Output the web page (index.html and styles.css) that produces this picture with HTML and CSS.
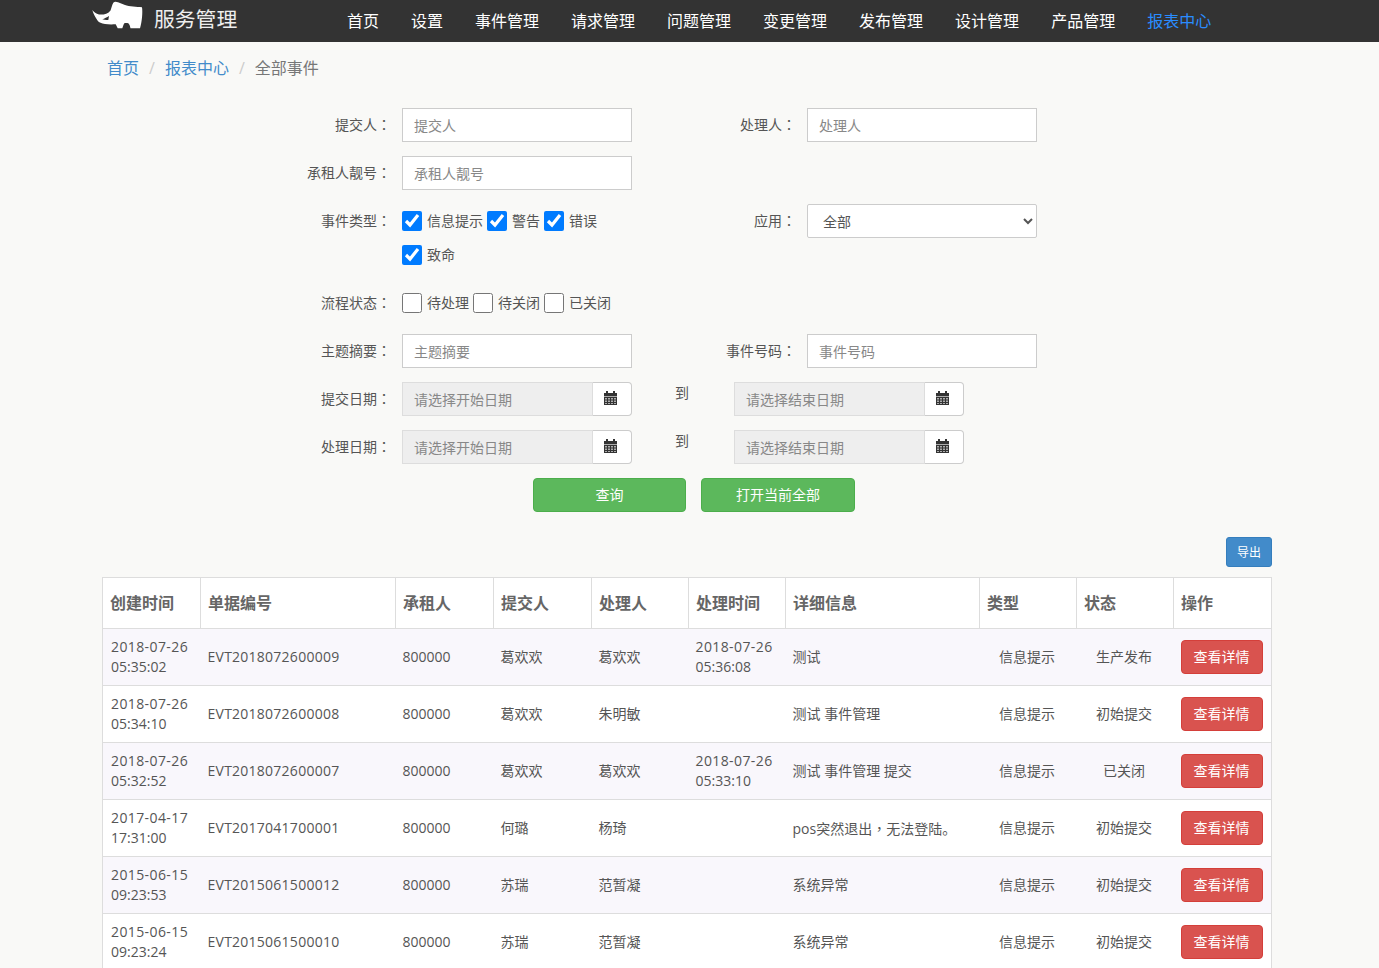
FILE: index.html
```html
<!DOCTYPE html>
<html>
  <head>
    <meta charset="UTF-8" />
    <title>全部事件</title>
    <link rel="stylesheet" href="styles.css">
  </head>
  <body>
    <svg width="0" height="0" class="defs">
      <symbol id="cal" viewBox="0 0 13 14">
        <path fill="#333" d="M2 0h2v2h5V0h2v2h2v12H0V2h2z"/>
        <path fill="#fff" opacity=".6" d="M0 5h13v1H0zM1 7h2v1.500H1zM4 7h2v1.500H4zM7 7h2v1.500H7zM10 7h2v1.500h-2zM1 9.500h2V11H1zM4 9.500h2V11H4zM7 9.500h2V11H7zM10 9.500h2V11h-2zM1 12h2v1H1zM4 12h2v1H4zM7 12h2v1H7zM10 12h2v1h-2z"/>
      </symbol>
    </svg>

    <nav class="topbar">
      <a class="brand" href="#">
        <svg class="logo" width="52" height="30" viewBox="0 0 52 30">
          <path fill="#fff" fill-rule="evenodd" d="M.3 10C2 12 4 14 7 14.500 11 15 16 14 18.500 10.500 19.500 8 20 4.500 21.300 2.700 22.500 1.500 24 1.500 26 2.300L33 5C37 6.500 45 6.800 50 7.300 50.800 12 50 22 48 28.300L38.500 28.300C38 26 37.500 24.500 36.300 23.300 35 22.800 33.500 22.800 32.300 23.300 31.300 24.800 31 26.500 30.300 28.300L25.700 28.300 23.700 24.300C20 24.500 16 24.500 13 24 9.500 23.300 7 22.500 5.700 20.700 3.500 17.500 1.500 14 .3 10ZM10.300 19.300C12.500 18.500 15 17.300 17 16L16.300 20C14.500 20.300 12.300 20 10.300 19.300Z"/>
        </svg>
        <span class="brand-name">服务管理</span>
      </a>
      <ul class="nav-list">
        <li><a href="#">首页</a></li>
        <li><a href="#">设置</a></li>
        <li><a href="#">事件管理</a></li>
        <li><a href="#">请求管理</a></li>
        <li><a href="#">问题管理</a></li>
        <li><a href="#">变更管理</a></li>
        <li><a href="#">发布管理</a></li>
        <li><a href="#">设计管理</a></li>
        <li><a href="#">产品管理</a></li>
        <li><a class="active" href="#">报表中心</a></li>
      </ul>
    </nav>

    <main class="container">
      <ol class="crumbs">
        <li><a href="#">首页</a></li>
        <li><a href="#">报表中心</a></li>
        <li>全部事件</li>
      </ol>

      <form class="search-form">
        <div class="form-row">
          <label class="lbl">提交人：</label>
          <input class="ctl" placeholder="提交人" />
          <label class="lbl2">处理人：</label>
          <input class="ctl" placeholder="处理人" />
        </div>
        <div class="form-row">
          <label class="lbl">承租人靓号：</label>
          <input class="ctl" placeholder="承租人靓号" />
        </div>
        <div class="form-row">
          <label class="lbl">事件类型：</label>
          <div class="checks">
            <label class="chk"><input type="checkbox" checked />信息提示</label>
            <label class="chk"><input type="checkbox" checked />警告</label>
            <label class="chk"><input type="checkbox" checked />错误</label>
            <label class="chk"><input type="checkbox" checked />致命</label>
          </div>
          <label class="lbl2">应用：</label>
          <select class="ctl sel"><option>全部</option></select>
        </div>
        <div class="form-row">
          <label class="lbl">流程状态：</label>
          <div class="checks">
            <label class="chk"><input type="checkbox" />待处理</label>
            <label class="chk"><input type="checkbox" />待关闭</label>
            <label class="chk"><input type="checkbox" />已关闭</label>
          </div>
        </div>
        <div class="form-row">
          <label class="lbl">主题摘要：</label>
          <input class="ctl" placeholder="主题摘要" />
          <label class="lbl2">事件号码：</label>
          <input class="ctl" placeholder="事件号码" />
        </div>
        <div class="form-row">
          <label class="lbl">提交日期：</label>
          <div class="date">
            <input readonly placeholder="请选择开始日期" />
            <span class="date-btn"><svg width="13" height="14"><use href="#cal"/></svg></span>
          </div>
          <span class="to">到</span>
          <div class="date">
            <input readonly placeholder="请选择结束日期" />
            <span class="date-btn"><svg width="13" height="14"><use href="#cal"/></svg></span>
          </div>
        </div>
        <div class="form-row">
          <label class="lbl">处理日期：</label>
          <div class="date">
            <input readonly placeholder="请选择开始日期" />
            <span class="date-btn"><svg width="13" height="14"><use href="#cal"/></svg></span>
          </div>
          <span class="to">到</span>
          <div class="date">
            <input readonly placeholder="请选择结束日期" />
            <span class="date-btn"><svg width="13" height="14"><use href="#cal"/></svg></span>
          </div>
        </div>
        <div class="form-btns">
          <button type="button" class="btn btn-green btn-query">查询</button>
          <button type="button" class="btn btn-green btn-open">打开当前全部</button>
        </div>
      </form>

      <div class="toolbar"><button type="button" class="btn btn-blue">导出</button></div>

      <table class="grid">
        <colgroup>
          <col style="width:98px"><col style="width:195px"><col style="width:98px"><col style="width:98px"><col style="width:97px">
          <col style="width:97px"><col style="width:194px"><col style="width:97px"><col style="width:97px"><col style="width:98px">
        </colgroup>
        <thead>
          <tr><th>创建时间</th><th>单据编号</th><th>承租人</th><th>提交人</th><th>处理人</th><th>处理时间</th><th>详细信息</th><th>类型</th><th>状态</th><th>操作</th></tr>
        </thead>
        <tbody>
          <tr>
            <td><span class="day">2018-07-26</span> 05:35:02</td><td class="code">EVT2018072600009</td><td>800000</td><td>葛欢欢</td><td>葛欢欢</td><td><span class="day">2018-07-26</span> 05:36:08</td><td>测试</td>
            <td class="mid">信息提示</td><td class="mid">生产发布</td><td><button type="button" class="btn btn-red">查看详情</button></td>
          </tr>
          <tr>
            <td><span class="day">2018-07-26</span> 05:34:10</td><td class="code">EVT2018072600008</td><td>800000</td><td>葛欢欢</td><td>朱明敏</td><td></td><td>测试 事件管理</td>
            <td class="mid">信息提示</td><td class="mid">初始提交</td><td><button type="button" class="btn btn-red">查看详情</button></td>
          </tr>
          <tr>
            <td><span class="day">2018-07-26</span> 05:32:52</td><td class="code">EVT2018072600007</td><td>800000</td><td>葛欢欢</td><td>葛欢欢</td><td><span class="day">2018-07-26</span> 05:33:10</td><td>测试 事件管理 提交</td>
            <td class="mid">信息提示</td><td class="mid">已关闭</td><td><button type="button" class="btn btn-red">查看详情</button></td>
          </tr>
          <tr>
            <td><span class="day">2017-04-17</span> 17:31:00</td><td class="code">EVT2017041700001</td><td>800000</td><td>何璐</td><td>杨琦</td><td></td><td>pos突然退出<span class="tc">，</span>无法登陆。</td>
            <td class="mid">信息提示</td><td class="mid">初始提交</td><td><button type="button" class="btn btn-red">查看详情</button></td>
          </tr>
          <tr>
            <td><span class="day">2015-06-15</span> 09:23:53</td><td class="code">EVT2015061500012</td><td>800000</td><td>苏瑞</td><td>范暂凝</td><td></td><td>系统异常</td>
            <td class="mid">信息提示</td><td class="mid">初始提交</td><td><button type="button" class="btn btn-red">查看详情</button></td>
          </tr>
          <tr>
            <td><span class="day">2015-06-15</span> 09:23:24</td><td class="code">EVT2015061500010</td><td>800000</td><td>苏瑞</td><td>范暂凝</td><td></td><td>系统异常</td>
            <td class="mid">信息提示</td><td class="mid">初始提交</td><td><button type="button" class="btn btn-red">查看详情</button></td>
          </tr>
        </tbody>
      </table>
    </main>
  </body>
</html>
```

FILE: styles.css
```css
* {
  box-sizing: border-box;
}
body {
  margin: 0;
  background: #f9f9f7;
  color: #555;
  font-family: "Open Sans", "Noto Sans CJK SC", sans-serif;
  font-size: 14px;
  line-height: 20px;
}
a {
  text-decoration: none;
}
.defs {
  display: block;
  height: 0;
}
.topbar {
  height: 42px;
  background: #333;
  display: flex;
  padding-left: 92px;
}
.brand {
  display: flex;
  align-items: flex-start;
  width: 239px;
  color: #eee;
}
.logo {
  margin-right: 10px;
}
.brand-name {
  font-size: 20.8px;
  line-height: 38px;
}
.nav-list {
  list-style: none;
  display: flex;
  gap: 32px;
  margin: 0;
  padding: 0 0 0 16px;
}
.nav-list a {
  color: #fff;
  font-size: 16px;
  line-height: 42px;
  display: block;
}
.nav-list a.active {
  color: #2a8cff;
}
.container {
  width: 1170px;
  margin-left: 102px;
}
.crumbs {
  list-style: none;
  display: flex;
  margin: 0;
  padding: 15px 5px 0;
  height: 66px;
  font-size: 16px;
  line-height: 22px;
  color: #777;
}
.crumbs a {
  color: #428bca;
}
.crumbs li + li::before {
  content: "/";
  color: #ccc;
  padding: 0 10px;
}
.form-row {
  display: flex;
  align-items: flex-start;
  margin-bottom: 14px;
}
.lbl,
.lbl2 {
  text-align: right;
  line-height: 34px;
  margin-right: 11px;
  font-family: "Open Sans", "Noto Sans CJK TC", sans-serif;
}
.lbl {
  width: 289px;
}
.lbl2 {
  width: 164px;
}
.tc {
  font-family: "Noto Sans CJK TC", sans-serif;
}
.ctl {
  width: 230px;
  height: 34px;
  padding: 6px 11px;
  border: 1px solid #ccc;
  background: #fff;
  color: #555;
  font: inherit;
}
.ctl::placeholder,
.date input::placeholder {
  color: #888;
  opacity: 1;
}
.sel {
  border-radius: 2px;
}
.checks {
  width: 230px;
  display: flex;
  flex-wrap: wrap;
  row-gap: 14px;
  padding: 7px 0;
}
.chk {
  display: flex;
  align-items: center;
  height: 20px;
  margin-right: 4px;
}
.chk input {
  width: 20px;
  height: 20px;
  margin: 0 5px 0 0;
  accent-color: #007bff;
}
.date {
  width: 230px;
  height: 34px;
  display: flex;
}
.date input {
  width: 191px;
  height: 34px;
  padding: 6px 11px;
  border: 1px solid #ddd;
  background: #eee;
  color: #555;
  font: inherit;
}
.date-btn {
  flex: 1;
  display: flex;
  align-items: center;
  justify-content: center;
  padding: 0 3px 2px 0;
  background: #fff;
  border: 1px solid #ccc;
  border-left: 0;
  border-radius: 0 4px 4px 0;
}
.to {
  width: 102px;
  padding-left: 43px;
  line-height: 22px;
}
.form-btns {
  display: flex;
  gap: 15px;
  padding-left: 431px;
  height: 34px;
}
.btn {
  height: 34px;
  padding: 0;
  border: 1px solid;
  border-radius: 4px;
  color: #fff;
  font: inherit;
}
.btn-green {
  background: #5cb85c;
  border-color: #4cae4c;
}
.btn-query {
  width: 153px;
}
.btn-open {
  width: 154px;
}
.btn-blue {
  width: 46px;
  height: 30px;
  padding-top: 1px;
  font-size: 12px;
  background: #428bca;
  border-color: #357ebd;
  border-radius: 3px;
}
.btn-red {
  width: 82px;
  background: #d9534f;
  border-color: #d43f3a;
}
.toolbar {
  display: flex;
  justify-content: flex-end;
  margin-top: 25px;
  margin-bottom: 10px;
}
.grid {
  width: 1169px;
  table-layout: fixed;
  border-collapse: collapse;
  background: #fff;
}
.grid th,
.grid td {
  border-bottom: 1px solid #ddd;
  padding: 8px 7px;
  text-align: left;
  vertical-align: middle;
}
.grid th {
  height: 51px;
  font-size: 16px;
  font-weight: 700;
  background: #fff;
  border: 1px solid #ddd;
  border-bottom-width: 1px;
  color: #666;
}
.grid td {
  height: 57px;
  border-left: 0;
  border-right: 0;
}
.grid td:first-child {
  border-left: 1px solid #ddd;
}
.grid td:last-child {
  border-right: 1px solid #ddd;
}
.grid td:nth-child(1) {
  padding-left: 8px;
}
.grid tbody tr:nth-child(odd) {
  background: #f9f7fc;
}
.grid .mid {
  padding-right: 9px;
  text-align: center;
}
.code {
  letter-spacing: .25px;
}
.day {
  letter-spacing: .4px;
}
```
